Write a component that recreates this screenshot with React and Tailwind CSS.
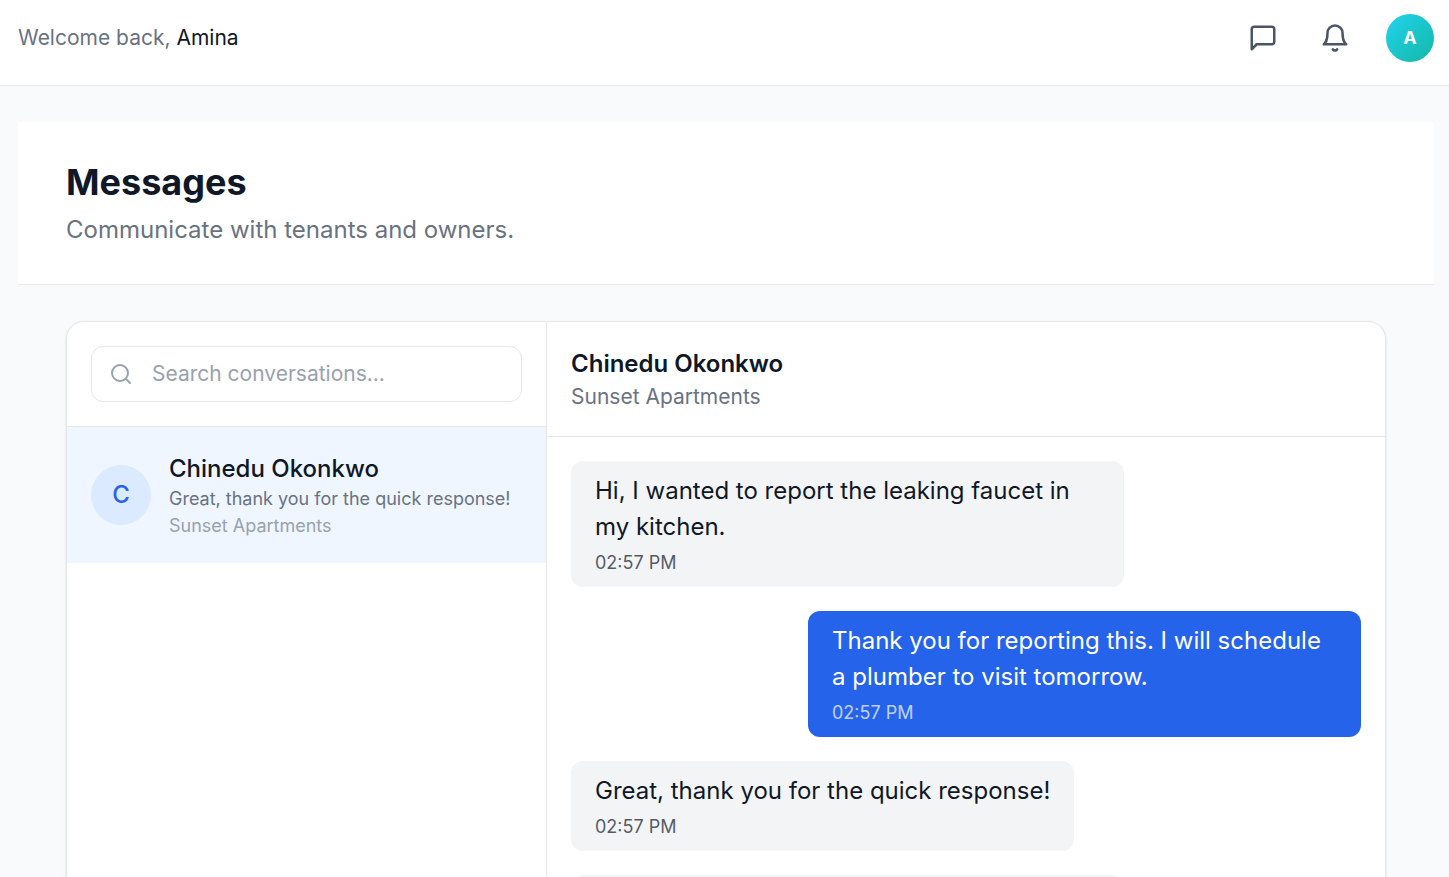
const messages = [
  { id: 1, text: "Hi, I wanted to report the leaking faucet in my kitchen.", time: "02:57 PM", mine: false },
  { id: 2, text: "Thank you for reporting this. I will schedule a plumber to visit tomorrow.", time: "02:57 PM", mine: true },
  { id: 3, text: "Great, thank you for the quick response!", time: "02:57 PM", mine: false },
];

const Topbar = () => {
  return (
    <header className="w-full h-[86px] bg-white border-b border-gray-200 flex items-start justify-between pl-[18px] pr-[15px] pt-3.5">
      <p className="h-12 flex items-center text-[21px] leading-[30px] text-gray-500 whitespace-pre">
        Welcome back, <span className="text-gray-900">Amina</span>
      </p>

      <div className="flex items-center">
        {/* Messages */}
        <button className="text-gray-600 mr-[42px]">
          <svg
            fill="none"
            viewBox="0 0 24 24"
            strokeWidth="2"
            stroke="currentColor"
            strokeLinecap="round"
            strokeLinejoin="round"
            className="w-[30px] h-[30px]">
            <path d="M21 15a2 2 0 0 1-2 2H7l-4 4V5a2 2 0 0 1 2-2h14a2 2 0 0 1 2 2z" />
          </svg>
        </button>

        {/* Notifications */}
        <button className="text-gray-600 mr-9">
          <svg
            fill="none"
            viewBox="0 0 24 24"
            strokeWidth="2"
            stroke="currentColor"
            strokeLinecap="round"
            strokeLinejoin="round"
            className="w-[30px] h-[30px]">
            <path d="M18 8A6 6 0 0 0 6 8c0 7-3 9-3 9h18s-3-2-3-9" />
            <path d="M13.73 21a2 2 0 0 1-3.46 0" />
          </svg>
        </button>

        <div className="w-12 h-12 rounded-full bg-linear-to-br from-[#22d3ee] to-[#14b8a6] flex items-center justify-center text-lg font-bold text-white">
          A
        </div>
      </div>
    </header>
  );
};

const ConversationList = () => {
  return (
    <div className="w-[480px] shrink-0 border-r border-gray-200">
      <div className="p-6 border-b border-gray-200">
        <div className="h-14 flex items-center gap-[19px] border border-gray-200 rounded-xl px-[17px]">
          <svg
            fill="none"
            viewBox="0 0 24 24"
            strokeWidth="2"
            stroke="currentColor"
            strokeLinecap="round"
            strokeLinejoin="round"
            className="w-6 h-6 shrink-0 text-gray-400">
            <circle cx="11" cy="11" r="8" />
            <path d="m21 21-4.35-4.35" />
          </svg>
          <input
            type="text"
            placeholder="Search conversations..."
            className="w-full min-w-0 text-[21px] leading-[30px] outline-none placeholder:text-gray-400"
          />
        </div>
      </div>

      <div className="flex items-center gap-[18px] px-6 pt-6 pb-[25px] bg-[#eff6ff]">
        <div className="w-[60px] h-[60px] shrink-0 rounded-full bg-[#dbeafe] flex items-center justify-center text-2xl font-medium text-[#2563eb]">
          C
        </div>
        <div className="min-w-0">
          <p className="text-[24px] leading-9 font-medium text-gray-900">Chinedu Okonkwo</p>
          <p className="text-lg leading-6 text-gray-500 whitespace-nowrap">Great, thank you for the quick response!</p>
          <p className="text-lg leading-6 mt-[3px] text-gray-400">Sunset Apartments</p>
        </div>
      </div>
    </div>
  );
};

const Message = ({ text, time, mine }) => {
  return (
    <div className={mine ? "flex justify-end" : "flex justify-start"}>
      <div className={`max-w-[70%] rounded-xl px-6 py-3 ${mine ? "bg-[#2563eb] text-white" : "bg-gray-100 text-gray-900"}`}>
        <p className="text-[24px] leading-9">{text}</p>
        <p className="text-lg leading-6 mt-1.5 opacity-70">{time}</p>
      </div>
    </div>
  );
};

const App = () => {
  return (
    <div className="h-screen overflow-hidden bg-gray-50 font-['Inter',sans-serif] text-gray-900">
      <Topbar />

      <main className="pl-[18px] pr-[15px] pt-9">
        <div className="bg-white border-b border-gray-200 px-12 py-9">
          <h1 className="text-4xl leading-[48px] font-bold">Messages</h1>
          <p className="mt-1.5 text-[24px] leading-9 text-gray-500">Communicate with tenants and owners.</p>
        </div>

        <div className="mx-12 mt-9 h-[900px] flex bg-white border border-gray-200 rounded-[18px] shadow-sm overflow-hidden">
          <ConversationList />

          <div className="flex-1 min-w-0">
            <div className="p-6 border-b border-gray-200">
              <h2 className="text-[24px] leading-9 font-semibold">Chinedu Okonkwo</h2>
              <p className="text-[21px] leading-[30px] text-gray-500">Sunset Apartments</p>
            </div>
            <div className="p-6 flex flex-col gap-6">
              {messages.map((m) => (
                <Message key={m.id} text={m.text} time={m.time} mine={m.mine} />
              ))}
              {/* next message, below the fold */}
              <div className="w-[70%] h-[126px] rounded-xl bg-gray-100"></div>
            </div>
          </div>
        </div>
      </main>
    </div>
  );
};

export default App;
